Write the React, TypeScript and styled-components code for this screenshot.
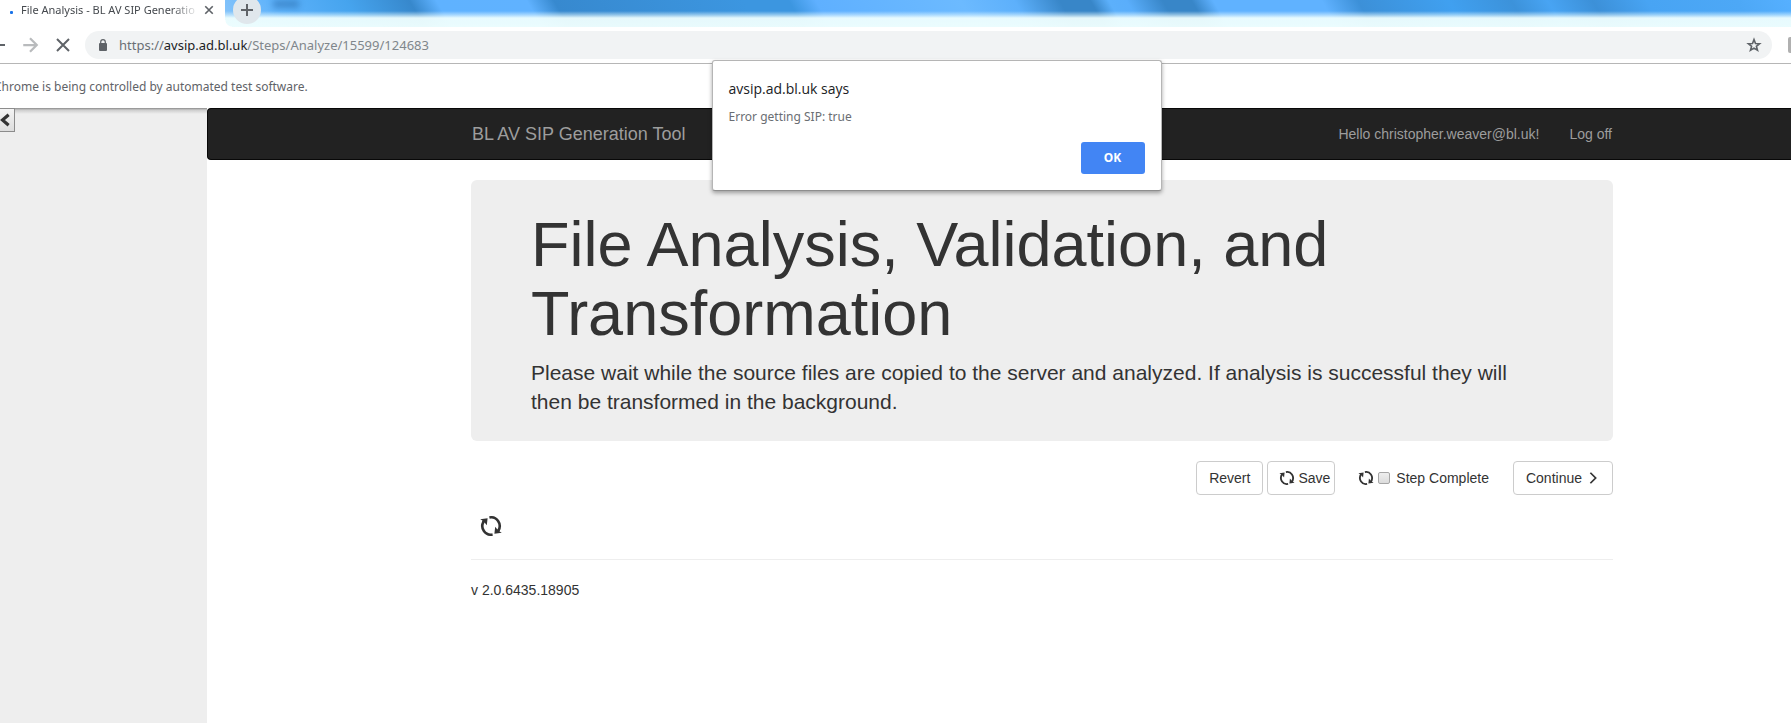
import React from "react";
import styled, { createGlobalStyle } from "styled-components";

const uiFont = '"Noto Sans", "Open Sans", sans-serif';
const pageFont = '"Liberation Sans", Arial, sans-serif';

const GlobalStyle = createGlobalStyle`
  *, *::before, *::after { box-sizing: border-box; }
  body { margin: 0; background: #fff; color: #333; font: 14px/20px ${pageFont}; }
  button, input { font: inherit; margin: 0; }
  svg { display: block; flex: none; }
`;

const Window = styled.div`
  position: relative;
  display: flex;
  flex-direction: column;
  min-height: 100vh;
  overflow: hidden;
`;

const TabStrip = styled.header`
  display: flex;
  height: 27px;
  background:
    radial-gradient(circle at 100% 0, transparent 6px, #fff 7px) 225px 100% / 7px 7px no-repeat,
    linear-gradient(to bottom, rgba(240, 255, 254, 0) 11px, rgba(240, 255, 254, 0.5) 15px, rgba(240, 255, 254, 0.94) 18px, rgba(240, 255, 254, 0.96) 27px),
    linear-gradient(60deg, #8fc8fa 12%, #5db2fb 16%, #46a4ee 20%, #3788cc 23.5%, #5fb2ff 25%, #60b2ff 30%, #3789cf 31.5%, #3c96e0 42%, #3c96e0 44.5%, #5fb0ff 46%, #6cbaff 54%, #5db0fb 57%, #3886c8 59.5%, #3886c8 61.2%, #5cb0fb 62.2%, #5aaefb 63.2%, #3886c8 65.2%, #3886c8 66.8%, #60b2ff 68%, #60b2ff 74%, #3c90d8 76%, #40a0f0 81%, #3c92da 84.5%, #48a4f3 86.5%, #3c90d8 89%, #48a4f3 92%, #4da8f6 97%, #56b0ff 100%);
`;

const Tab = styled.div`
  display: flex;
  align-items: center;
  width: 225px;
  padding: 0 10px 7px;
  background: #fff;
`;

const LoadingDot = styled.span`
  width: 3px;
  height: 3px;
  margin-top: 4px;
  border-radius: 1px;
  background: #1a73e8;
`;

const TabTitle = styled.span`
  flex: 1;
  margin: 0 8px;
  overflow: hidden;
  white-space: nowrap;
  font: 11px/20px ${uiFont};
  color: #45494e;
  mask-image: linear-gradient(to right, #000 150px, transparent 178px);
`;

const BareButton = styled.button`
  display: flex;
  align-items: center;
  justify-content: center;
  flex: none;
  padding: 0;
  border: 0;
  background: none;
  color: #5f6368;
`;

const NewTab = styled(BareButton)`
  width: 28px;
  height: 28px;
  margin: -4px 0 0 8px;
  border-radius: 50%;
  background: #e0e7ec;
`;

const GhostText = styled.span`
  width: 26px;
  height: 8px;
  margin-left: 12px;
  background: #1f5e9d;
  opacity: 0.45;
  filter: blur(3px);
`;

const Toolbar = styled.nav`
  display: flex;
  align-items: center;
  height: 37px;
  padding: 0 0 1px;
  border-bottom: 1px solid #b6b6b6;
`;

const NavIcons = styled.div`
  display: flex;
  align-items: center;
  gap: 16px;
  margin-left: -11px;
`;

const AddressBar = styled.div`
  display: flex;
  flex: 1;
  align-items: center;
  height: 28px;
  margin: 0 16px 0 14px;
  padding: 0 10px 0 13px;
  border-radius: 14px;
  background: #f1f3f4;
`;

const Url = styled.span`
  flex: 1;
  margin-left: 11px;
  font: 13px/20px ${uiFont};
  color: #80868b;
`;

const UrlScheme = styled.span`
  color: #6a6f74;
`;

const UrlHost = styled.span`
  color: #202124;
`;

const ExtensionEdge = styled.span`
  width: 3px;
  height: 16px;
  border-radius: 2px 0 0 2px;
  background: #b0b0b0;
`;

const InfoBar = styled.div`
  display: flex;
  align-items: center;
  height: 44px;
  margin-left: -6px;
  padding-top: 2px;
  font: 12px/20px ${uiFont};
  color: #5f6368;
`;

const Body = styled.div`
  display: flex;
  flex: 1;
`;

const Sidebar = styled.aside`
  flex: none;
  width: 207px;
  background: linear-gradient(#8a8a8a, #ccc 2px, #eee 6px);
`;

const CollapseButton = styled(BareButton)`
  width: 15px;
  height: 24px;
  padding-right: 2px;
  border: 1px solid #8c8c8c;
  border-left: 0;
  background: linear-gradient(#f4f4f4, #ddd);
  color: #333;
`;

const Page = styled.div`
  flex: 1;
  min-width: 0;
`;

const Navbar = styled.nav`
  display: flex;
  align-items: center;
  height: 52px;
  padding: 0 179px 0 264px;
  border: 1px solid #080808;
  border-right: 0;
  border-radius: 4px 0 0 4px;
  background: #222;
`;

const NavLink = styled.a`
  margin-left: 30px;
  color: #9d9d9d;
  text-decoration: none;
`;

const Brand = styled(NavLink)`
  margin: 0 auto 0 0;
  font-size: 18px;
`;

const Content = styled.main`
  padding: 20px 178px 20px 264px;
`;

const Jumbotron = styled.section`
  padding: 30px 60px 25px;
  border-radius: 6px;
  background: #eee;
`;

const Heading = styled.h1`
  margin: 0 0 10px;
  font-size: 63px;
  font-weight: 500;
  line-height: 69px;
`;

const Lead = styled.p`
  margin: 0;
  font-size: 21px;
  line-height: 29px;
`;

const Actions = styled.div`
  display: flex;
  align-items: center;
  justify-content: flex-end;
  gap: 4px;
  margin-top: 20px;
`;

const Button = styled.button`
  display: flex;
  align-items: center;
  gap: 4px;
  height: 34px;
  padding: 0 12px;
  border: 1px solid #ccc;
  border-radius: 4px;
  background: #fff;
  color: #333;
`;

const SaveButton = styled(Button)`
  gap: 3px;
  padding: 0 4px 0 11px;
`;

const StepComplete = styled.label`
  display: flex;
  align-items: center;
  margin: 0 20px 0 19px;
`;

const CheckBox = styled.input`
  appearance: none;
  width: 12px;
  height: 12px;
  margin: 0 6px 0 4px;
  border: 1px solid #a6a6a6;
  border-radius: 2px;
  background: linear-gradient(#eee, #dcdcdc);
`;

const Loading = styled.div`
  padding: 21px 9px 23px;
`;

const Footer = styled.footer`
  padding-top: 20px;
  border-top: 1px solid #eee;
`;

const DialogLayer = styled.div`
  position: absolute;
  top: 60px;
  left: 82px;
  right: 0;
  display: flex;
  justify-content: center;
`;

const Dialog = styled.section`
  display: flex;
  flex-direction: column;
  width: 450px;
  height: 131px;
  padding: 17px 16px 16px;
  border: 1px solid #b5b5b5;
  border-bottom-color: #8e8e8e;
  border-radius: 3px;
  background: #fff;
  box-shadow: 0 2px 4px rgba(0, 0, 0, 0.35);
  font-family: ${uiFont};
`;

const DialogTitle = styled.h2`
  margin: 0;
  font-family: "Open Sans", sans-serif;
  font-size: 14px;
  font-weight: 400;
  line-height: 22px;
  color: #202124;
`;

const DialogText = styled.p`
  margin: 7px 0 0;
  font-size: 12px;
  line-height: 20px;
  color: #6a6e73;
`;

const OkButton = styled.button`
  align-self: flex-end;
  width: 64px;
  height: 32px;
  margin-top: auto;
  padding: 0;
  border: 0;
  border-radius: 3px;
  background: #4285f4;
  color: #fff;
  font-size: 12px;
  font-weight: 700;
`;

const SyncIcon = ({ width, height }: { width: number; height: number }) => (
  <svg width={width} height={height} viewBox="0 0 22 20" aria-hidden="true">
    {[0, 180].map((turn) => (
      <g key={turn} transform={`rotate(${turn} 11 10)`}>
        <path d="M12.6 18.5A8.6 8.6 0 0 1 3.6 5.6" fill="none" stroke="#333" strokeWidth="2.6" />
        <path d="M.2 3.2 7.6 2.2 6.8 9.2 4.6 6.6 1.8 7 2.4 4.6Z" fill="#333" />
      </g>
    ))}
  </svg>
);

const LineIcon = ({ size, d, stroke = 2, color = "currentColor" }: { size: number; d: string; stroke?: number; color?: string }) => (
  <svg width={size} height={size} viewBox="0 0 16 16" fill="none" stroke={color} strokeWidth={stroke} aria-hidden="true">
    <path d={d} />
  </svg>
);

export default function App() {
  return (
    <>
      <GlobalStyle />
      <Window>
        <TabStrip>
          <Tab>
            <LoadingDot />
            <TabTitle>File Analysis - BL AV SIP Generation</TabTitle>
            <BareButton aria-label="Close tab">
              <LineIcon size={12} d="M3 3l10 10M13 3L3 13" stroke={2.2} />
            </BareButton>
          </Tab>
          <NewTab aria-label="New tab">
            <LineIcon size={16} d="M8 2v12M2 8h12" />
          </NewTab>
          <GhostText />
        </TabStrip>
        <Toolbar>
          <NavIcons>
            <BareButton aria-label="Back">
              <LineIcon size={16} d="M16 8H2M8 2L2 8l6 6" />
            </BareButton>
            <BareButton aria-label="Forward">
              <LineIcon size={18} d="M2 8h12M8 2l6 6-6 6" color="#b9bbbd" />
            </BareButton>
            <BareButton aria-label="Stop loading">
              <LineIcon size={16} d="M2 2l12 12M14 2L2 14" />
            </BareButton>
          </NavIcons>
          <AddressBar>
            <svg width="10" height="12" viewBox="0 0 10 12" aria-hidden="true">
              <rect x="1" y="4" width="8" height="8" rx="1" fill="#5f6368" />
              <path d="M2.7 5V3a2.3 2.3 0 0 1 4.6 0v2" fill="none" stroke="#5f6368" strokeWidth="1.2" />
            </svg>
            <Url>
              <UrlScheme>https://</UrlScheme>
              <UrlHost>avsip.ad.bl.uk</UrlHost>/Steps/Analyze/15599/124683
            </Url>
            <BareButton aria-label="Bookmark this page">
              <LineIcon size={16} d="M8 2.6l1.5 3.9 4.1.2-3.2 2.6 1.1 4L8 11.1l-3.5 2.2 1.1-4L2.4 6.7l4.1-.2Z" stroke={1.6} />
            </BareButton>
          </AddressBar>
          <ExtensionEdge />
        </Toolbar>
        <InfoBar>Chrome is being controlled by automated test software.</InfoBar>
        <Body>
          <Sidebar>
            <CollapseButton aria-label="Collapse sidebar">
              <LineIcon size={14} d="M11 2L4 8l7 6" stroke={3.6} />
            </CollapseButton>
          </Sidebar>
          <Page>
            <Navbar>
              <Brand href="#">BL AV SIP Generation Tool</Brand>
              <NavLink href="#account">Hello christopher.weaver@bl.uk!</NavLink>
              <NavLink href="#logoff">Log off</NavLink>
            </Navbar>
            <Content>
              <Jumbotron>
                <Heading>File Analysis, Validation, and Transformation</Heading>
                <Lead>
                  Please wait while the source files are copied to the server and analyzed. If analysis is successful
                  they will then be transformed in the background.
                </Lead>
              </Jumbotron>
              <Actions>
                <Button>Revert</Button>
                <SaveButton>
                  <SyncIcon width={16} height={14} />
                  Save
                </SaveButton>
                <StepComplete>
                  <SyncIcon width={16} height={14} />
                  <CheckBox type="checkbox" />
                  Step Complete
                </StepComplete>
                <Button>
                  Continue
                  <LineIcon size={14} d="M5 2l6 6-6 6" />
                </Button>
              </Actions>
              <Loading>
                <SyncIcon width={22} height={20} />
              </Loading>
              <Footer>v 2.0.6435.18905</Footer>
            </Content>
          </Page>
        </Body>
        <DialogLayer>
          <Dialog role="alertdialog" aria-labelledby="alert-title">
            <DialogTitle id="alert-title">avsip.ad.bl.uk says</DialogTitle>
            <DialogText>Error getting SIP: true</DialogText>
            <OkButton>OK</OkButton>
          </Dialog>
        </DialogLayer>
      </Window>
    </>
  );
}
